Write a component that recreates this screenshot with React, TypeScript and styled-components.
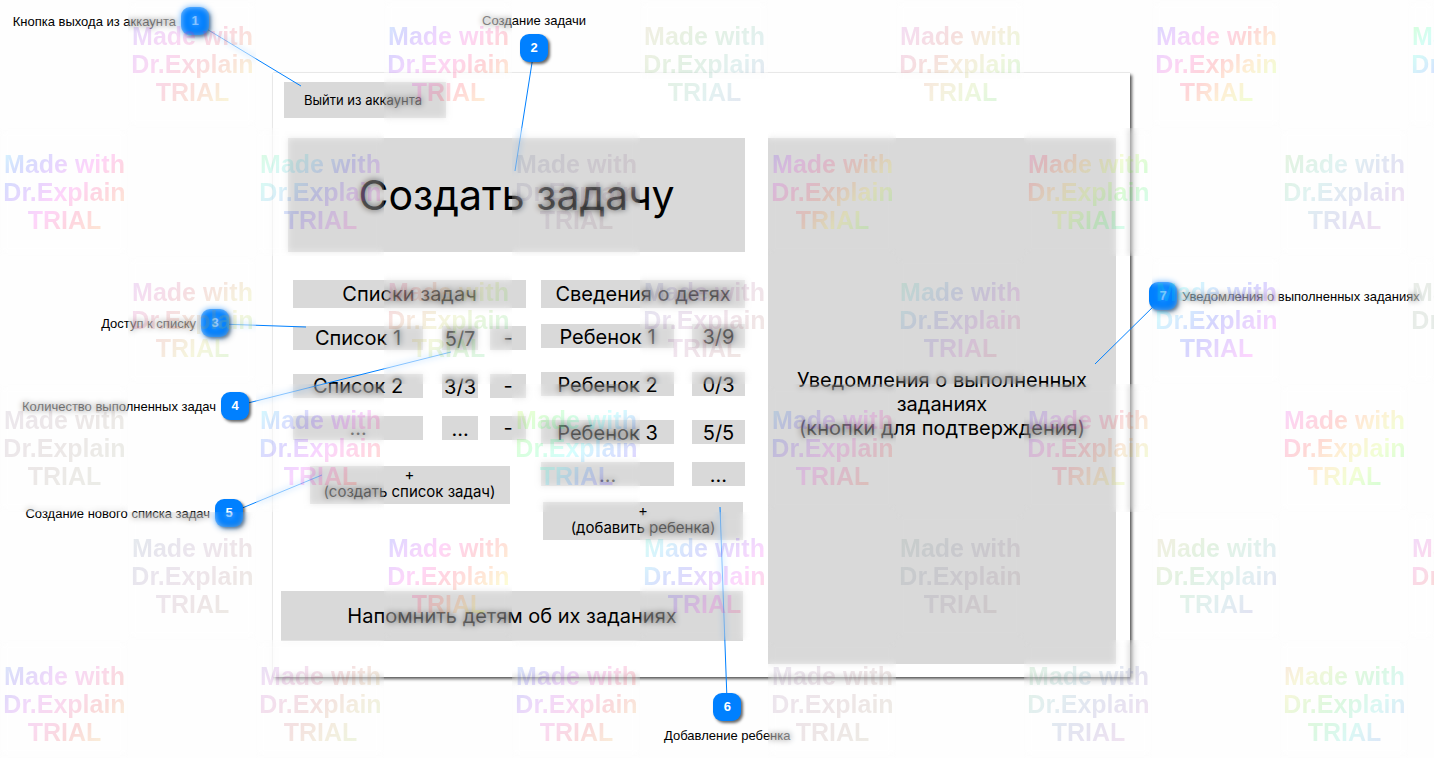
import React from 'react';
import styled, { createGlobalStyle } from 'styled-components';

const GlobalStyle = createGlobalStyle`
  *, *::before { box-sizing: border-box; }
  body { margin: 0; background: #fefefe; color: #000; font-family: Inter, "Liberation Sans", sans-serif; }
  button { font: inherit; color: inherit; border: 0; padding: 0; margin: 0; cursor: pointer; }
  h2, p, ul { margin: 0; padding: 0; font-weight: 400; list-style: none; }
`;

const Page = styled.main`
  position: relative;
  min-height: 100vh;
  padding: 73px 304px 81px 273px;
  overflow: hidden;
`;

const Board = styled.section`
  display: flex;
  flex-direction: column;
  align-items: flex-start;
  gap: 20px;
  padding: 9px 14px 13px 8px;
  background: #fff;
  box-shadow: 0 0 1px rgba(0, 0, 0, 0.3), 2px 2px 3px rgba(0, 0, 0, 0.65);
`;

const Block = styled.button`
  background: #d9d9d9;
  text-align: center;
`;

const ExitButton = styled(Block)`
  height: 36px;
  margin-left: 3px;
  padding: 0 24px 0 20px;
  font-size: 13px;
`;

const Body = styled.div`
  display: grid;
  grid-template-columns: minmax(0, 4fr) minmax(0, 3fr);
  gap: 23px;
  width: 100%;
`;

const Left = styled.div`
  display: flex;
  flex-direction: column;
  gap: 28px;
`;

const CreateButton = styled(Block)`
  height: 114px;
  margin-left: 7px;
  font-size: 41px;
`;

const Columns = styled.div`
  display: grid;
  grid-template-columns: minmax(0, 8fr) minmax(0, 7fr);
  gap: 15px;
  padding-left: 12px;
`;

const Column = styled.section`
  display: flex;
  flex-direction: column;
  font-size: 20px;
  line-height: 24px;
`;

const Heading = styled.h2`
  padding: 2px 0;
  background: #d9d9d9;
  font-size: 20px;
  line-height: 24px;
  text-align: center;
`;

const Row = styled.li<{ $space: number }>`
  display: grid;
  grid-template-rows: 24px;
  margin-top: ${(p) => p.$space}px;
`;

const ListRow = styled(Row)`
  grid-template-columns: minmax(0, 1fr) 36px 36px;
  gap: 12px;

  & > :first-child { margin-right: 7px; }
`;

const ChildRow = styled(Row)`
  grid-template-columns: minmax(0, 1fr) 53px;
  gap: 18px;
`;

const Value = styled.span`
  background: #d9d9d9;
  line-height: 26px;
  text-align: center;
`;

const AddButton = styled(Block)<{ $space: number }>`
  align-self: center;
  width: 200px;
  height: 38px;
  margin-top: ${(p) => p.$space}px;
  padding-bottom: 9px;
  font-size: 15px;
  line-height: 17px;
`;

const RemindButton = styled(Block)`
  height: 50px;
  margin: auto 2px 23px 0;
  font-size: 20px;
`;

const Notices = styled.section`
  display: flex;
  align-items: center;
  justify-content: center;
  min-height: 526px;
  padding-top: 6px;
  background: #d9d9d9;
  font-size: 20px;
  line-height: 24px;
  text-align: center;
`;

const Leaders = styled.svg`
  position: absolute;
  top: 0;
  left: 0;
`;

type Side = 'left' | 'right' | 'top' | 'bottom';

const Callout = styled.div<{ $x: number; $y: number; $side: Side }>`
  position: absolute;
  ${(p) => (p.$side === 'left' ? `right: calc(100% - ${p.$x}px)` : `left: ${p.$x}px`)};
  top: ${(p) => p.$y}px;
  display: flex;
  flex-direction: ${(p) => ({ left: 'row-reverse', right: 'row', top: 'column-reverse', bottom: 'column' })[p.$side]};
  align-items: center;
  gap: 5px;
  font-family: "Liberation Sans", Arial, sans-serif;
  font-size: 13px;
  line-height: 16px;
  white-space: nowrap;
`;

const Label = styled.span`
  padding-top: 2px;
`;

const Badge = styled.b`
  width: 28px;
  height: 28px;
  border-radius: 9px;
  background: #0080ff;
  box-shadow: 2px 2px 3px rgba(0, 0, 0, 0.6);
  color: #fff;
  line-height: 28px;
  text-align: center;
`;

const Watermark = styled.div`
  position: absolute;
  inset: 0;
  overflow: hidden;
  pointer-events: none;
`;

const Strip = styled.div<{ $shifted: boolean }>`
  display: flex;
  gap: 128px;
  padding-left: ${(p) => (p.$shifted ? 128 : 0)}px;
`;

const Tile = styled.div`
  position: relative;
  flex: none;
  width: 128px;
  height: 128px;
  padding: 22px 0 0 1px;

  &::before {
    content: '';
    position: absolute;
    inset: 0;
    backdrop-filter: blur(3px);
    opacity: 0.6;
  }
`;

const TileText = styled.p<{ $paint: string }>`
  position: relative;
  background: ${(p) => p.$paint};
  background-clip: text;
  color: transparent;
  font: bold 25px/28px "Liberation Sans", Arial, sans-serif;
  text-align: center;
`;

type Tone = [from: number, to: number, saturation: number];

// Start hue, end hue and saturation of each watermark, strip by strip.
const tones: Tone[][] = [
  [[250, 440, 80], [210, 430, 100], [40, 250, 35], [290, 510, 60], [235, 480, 100], [120, 400, 100]],
  [[190, 420, 100], [130, 350, 80], [220, 360, 15], [250, 500, 90], [320, 550, 90], [100, 330, 45]],
  [[280, 490, 60], [320, 530, 60], [220, 400, 30], [150, 375, 50], [150, 330, 100], [100, 200, 12]],
  [[280, 460, 12], [180, 400, 100], [70, 290, 100], [200, 400, 80], [240, 470, 80], [290, 510, 100]],
  [[200, 430, 20], [235, 460, 100], [160, 370, 90], [150, 390, 12], [40, 270, 40], [280, 500, 80]],
  [[215, 430, 80], [260, 470, 50], [210, 430, 80], [260, 430, 20], [120, 330, 35], [20, 250, 70]],
];

const rainbow = ([from, to, saturation]: Tone) => {
  const stops = [0, 1, 2, 3, 4, 5, 6].map(
    (i) => `hsla(${Math.round(from + ((to - from) * i) / 6) % 360}, ${saturation}%, 50%, 0.16)`,
  );
  return `linear-gradient(135deg, ${stops.join(', ')})`;
};

const lists = [
  { name: 'Список 1', done: '5/7', space: 18 },
  { name: 'Список 2', done: '3/3', space: 24 },
  { name: '...', done: '...', space: 18 },
];

const children = [
  { name: 'Ребенок 1', done: '3/9', space: 16 },
  { name: 'Ребенок 2', done: '0/3', space: 24 },
  { name: 'Ребенок 3', done: '5/5', space: 24 },
  { name: '...', done: '...', space: 18 },
];

// x is the outer edge of the badge for a label on its left, otherwise the left edge of the callout.
const callouts = [
  { x: 209, y: 7, side: 'left', text: 'Кнопка выхода из аккаунта', line: [205, 28, 301, 86] },
  { x: 482, y: 11, side: 'top', text: 'Создание задачи', line: [534, 50, 515, 171] },
  { x: 229, y: 309, side: 'left', text: 'Доступ к списку', line: [220, 324, 306, 327] },
  { x: 249, y: 392, side: 'left', text: 'Количество выполненных задач', line: [240, 405, 451, 352] },
  { x: 243, y: 499, side: 'left', text: 'Создание нового списка задач', line: [235, 511, 322, 475] },
  { x: 664, y: 693, side: 'bottom', text: 'Добавление ребенка', line: [727, 700, 720, 507] },
  { x: 1149, y: 282, side: 'right', text: 'Уведомления о выполненных заданиях', line: [1160, 300, 1095, 364] },
] as const;

export default function App() {
  return (
    <Page>
      <GlobalStyle />
      <Board>
        <ExitButton>Выйти из аккаунта</ExitButton>
        <Body>
          <Left>
            <CreateButton>Создать задачу</CreateButton>
            <Columns>
              <Column>
                <Heading>Списки задач</Heading>
                <ul>
                  {lists.map((item) => (
                    <ListRow key={item.name} $space={item.space}>
                      <Block>{item.name}</Block>
                      <Value>{item.done}</Value>
                      <Block>-</Block>
                    </ListRow>
                  ))}
                </ul>
                <AddButton $space={26}>
                  +<br />(создать список задач)
                </AddButton>
              </Column>
              <Column>
                <Heading>Сведения о детях</Heading>
                <ul>
                  {children.map((item) => (
                    <ChildRow key={item.name} $space={item.space}>
                      <Value>{item.name}</Value>
                      <Value>{item.done}</Value>
                    </ChildRow>
                  ))}
                </ul>
                <AddButton $space={16}>
                  +<br />(добавить ребенка)
                </AddButton>
              </Column>
            </Columns>
            <RemindButton>Напомнить детям об их заданиях</RemindButton>
          </Left>
          <Notices>
            <p>
              Уведомления о выполненных
              <br />
              заданиях
              <br />
              (кнопки для подтверждения)
            </p>
          </Notices>
        </Body>
      </Board>

      <Leaders width="100%" height="100%" aria-hidden="true">
        {callouts.map(({ text, line: [x1, y1, x2, y2] }) => (
          <line key={text} x1={x1} y1={y1} x2={x2} y2={y2} stroke="#0080ff" />
        ))}
      </Leaders>
      {callouts.map(({ x, y, side, text }, i) => (
        <Callout key={text} $x={x} $y={y} $side={side}>
          <Badge>{i + 1}</Badge>
          <Label>{text}</Label>
        </Callout>
      ))}

      <Watermark>
        {tones.map((strip, row) => (
          <Strip key={row} $shifted={row % 2 === 0}>
            {strip.map((tone, i) => (
              <Tile key={i}>
                <TileText $paint={rainbow(tone)}>
                  Made with
                  <br />
                  Dr.Explain
                  <br />
                  TRIAL
                </TileText>
              </Tile>
            ))}
          </Strip>
        ))}
      </Watermark>
    </Page>
  );
}
